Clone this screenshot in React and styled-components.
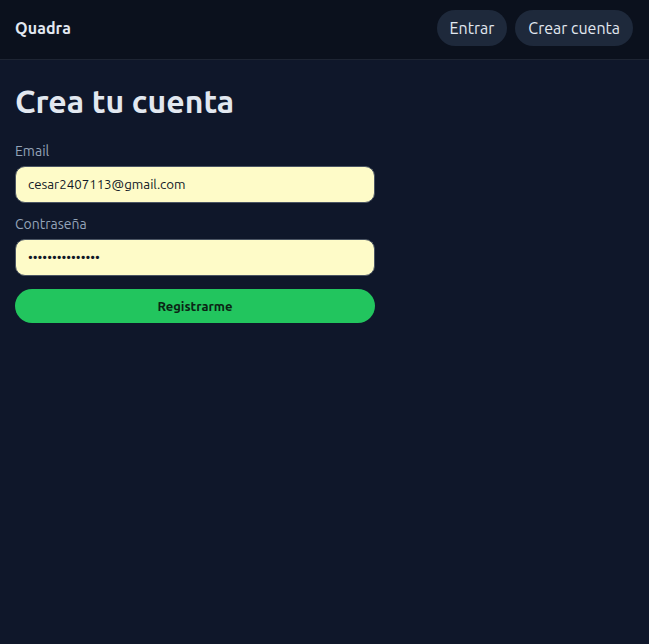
import React from "react";
import styled, { createGlobalStyle } from "styled-components";

const Global = createGlobalStyle`
  html, body { margin: 0; padding: 0; background: #0f172a; }
  body { font-family: "Ubuntu", "Noto Sans", "Open Sans", sans-serif; color: #e2e8f0; }
  * { box-sizing: border-box; }
`;

const Page = styled.div`
  min-height: 644px;
  background: #0f172a;
`;

const Header = styled.header`
  display: flex;
  align-items: center;
  justify-content: space-between;
  padding: 10px 16px 13px 15px;
  background: #0b111d;
  border-bottom: 1px solid #1e2533;
`;

const Brand = styled.div`
  font-weight: 700;
  font-size: 16px;
  letter-spacing: 0.1px;
  color: #e2e8f0;
`;

const Nav = styled.nav`
  display: flex;
  gap: 8px;
`;

const NavButton = styled.button`
  height: 36px;
  padding: 0 13px;
  border: none;
  border-radius: 999px;
  background: #1e293b;
  color: #e2e8f0;
  font-family: inherit;
  font-size: 16px;
`;

const Main = styled.main`
  padding: 21px 15px;
  width: 390px;
`;

const Title = styled.h1`
  margin: 0 0 21px;
  font-size: 32px;
  font-weight: 700;
  line-height: 40px;
  color: #e2e8f0;
`;

const Form = styled.form`
  display: flex;
  flex-direction: column;
  width: 360px;
`;

const Label = styled.label`
  font-size: 14px;
  line-height: 18px;
  color: #94a3b8;
  margin-bottom: 6px;
`;

const Input = styled.input`
  height: 37px;
  padding: 0 12px;
  border: 1px solid #4b5563;
  border-radius: 10px;
  background: #fefbc8;
  color: #111827;
  font-family: inherit;
  font-size: 13.3px;
  margin-bottom: ${(p) => p.$mb}px;
  outline: none;
`;

const Submit = styled.button`
  height: 34px;
  border: none;
  border-radius: 999px;
  background: #22c55e;
  color: #0b2414;
  font-family: inherit;
  font-weight: 700;
  font-size: 13px;
`;

export default function App() {
  return (
    <Page>
      <Global />
      <Header>
        <Brand>Quadra</Brand>
        <Nav>
          <NavButton>Entrar</NavButton>
          <NavButton>Crear cuenta</NavButton>
        </Nav>
      </Header>
      <Main>
        <Title>Crea tu cuenta</Title>
        <Form onSubmit={(e) => e.preventDefault()}>
          <Label>Email</Label>
          <Input type="email" defaultValue="cesar2407113@gmail.com" $mb={12} />
          <Label>Contraseña</Label>
          <Input type="password" defaultValue="aaaaaaaaaaaaaaa" $mb={13} />
          <Submit type="submit">Registrarme</Submit>
        </Form>
      </Main>
    </Page>
  );
}
